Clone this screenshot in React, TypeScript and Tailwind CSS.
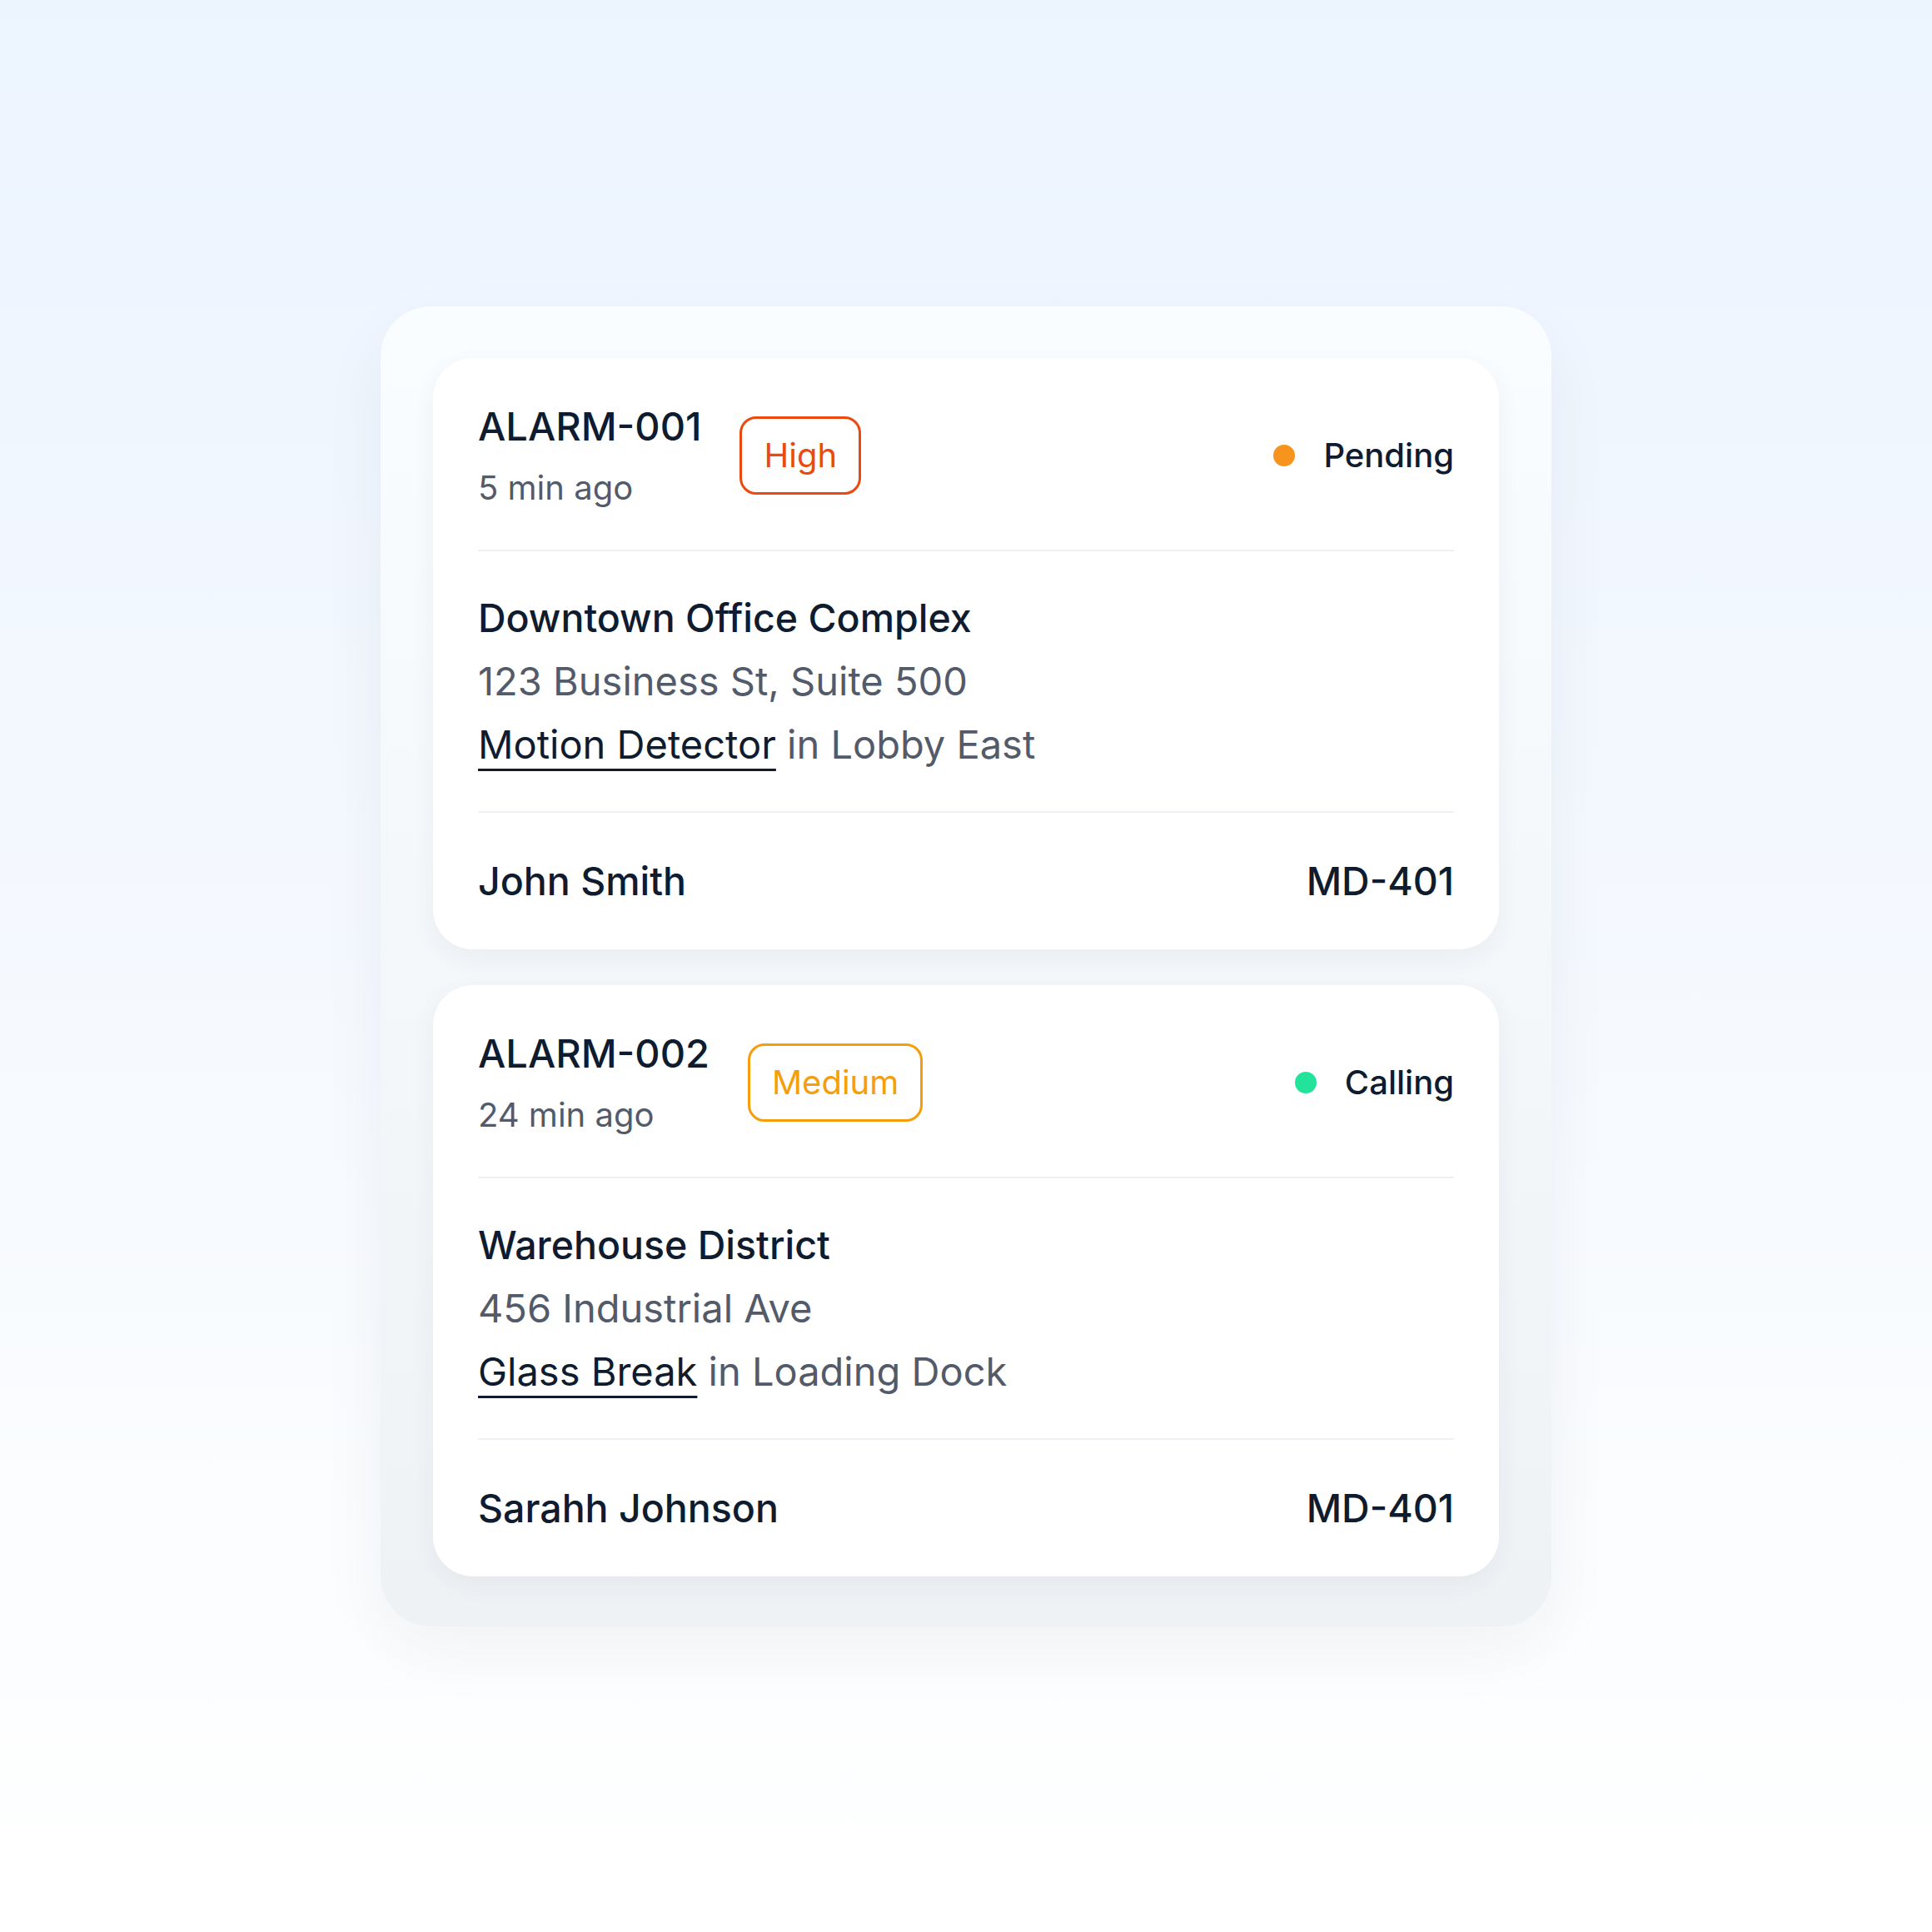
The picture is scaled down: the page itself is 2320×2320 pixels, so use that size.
import React from "react";

interface Alarm {
  id: string;
  ago: string;
  priority: "High" | "Medium";
  status: "Pending" | "Calling";
  site: string;
  address: string;
  device: string;
  zone: string;
  contact: string;
  code: string;
}

const ALARMS: Alarm[] = [
  {
    id: "ALARM-001",
    ago: "5 min ago",
    priority: "High",
    status: "Pending",
    site: "Downtown Office Complex",
    address: "123 Business St, Suite 500",
    device: "Motion Detector",
    zone: "Lobby East",
    contact: "John Smith",
    code: "MD-401",
  },
  {
    id: "ALARM-002",
    ago: "24 min ago",
    priority: "Medium",
    status: "Calling",
    site: "Warehouse District",
    address: "456 Industrial Ave",
    device: "Glass Break",
    zone: "Loading Dock",
    contact: "Sarahh Johnson",
    code: "MD-401",
  },
];

function PriorityBadge({ priority }: { priority: Alarm["priority"] }) {
  const tone =
    priority === "High"
      ? "border-[#ea4a10] text-[#ea4a10]"
      : "border-[#f59e0b] text-[#f59e0b]";
  return (
    <span
      className={`flex h-[94px] items-center rounded-[20px] border-[3px] px-[26px] text-[40px] leading-none font-normal ${tone}`}
    >
      {priority}
    </span>
  );
}

function StatusPill({ status }: { status: Alarm["status"] }) {
  const dot = status === "Pending" ? "bg-[#f7941d]" : "bg-[#22e39a]";
  return (
    <div className="flex items-center gap-[34px]">
      <span className={`h-[26px] w-[26px] rounded-full ${dot}`} />
      <span className="text-[40px] leading-none font-medium text-[#0f1b2e]">{status}</span>
    </div>
  );
}

function AlarmCard({ alarm }: { alarm: Alarm }) {
  return (
    <div className="rounded-[48px] bg-white px-[54px] shadow-[0_10px_30px_rgba(30,41,59,0.05)]">
      <div className="flex items-center justify-between border-b-2 border-[#edf0f4] pt-[50px] pb-[46px]">
        <div className="flex items-center gap-[46px]">
          <div className="flex flex-col">
            <span className="text-[47px] leading-[64px] font-medium text-[#0f1b2e]">{alarm.id}</span>
            <span className="mt-[14px] text-[40px] leading-[56px] text-[#535b6a]">{alarm.ago}</span>
          </div>
          <PriorityBadge priority={alarm.priority} />
        </div>
        <StatusPill status={alarm.status} />
      </div>

      <div className="flex flex-col border-b-2 border-[#edf0f4] py-[42px] text-[47px] leading-[76px]">
        <span className="text-[46.5px] font-medium text-[#0f1b2e]">{alarm.site}</span>
        <span className="text-[#535b6a]">{alarm.address}</span>
        <span className="text-[#535b6a]">
          <span className="text-[#0f1b2e] underline decoration-[3px] underline-offset-[12px]">
            {alarm.device}
          </span>{" "}
          in {alarm.zone}
        </span>
      </div>

      <div className="flex items-center justify-between py-[50px] text-[46.5px] leading-[64px] font-medium text-[#0f1b2e]">
        <span>{alarm.contact}</span>
        <span>{alarm.code}</span>
      </div>
    </div>
  );
}

export default function App() {
  return (
    <div
      className="flex min-h-[2320px] w-full items-center justify-center bg-gradient-to-b from-[#ecf4fe] via-[#f5f9fe] to-white"
      style={{ fontFamily: "Inter, 'Noto Sans', sans-serif" }}
    >
      <div className="flex w-[1406px] flex-col gap-[43px] rounded-[60px] bg-gradient-to-b from-[#fafdff] to-[#eff2f5] px-[63px] pt-[62px] pb-[60px] shadow-[0_30px_80px_rgba(30,41,59,0.05)]">
        {ALARMS.map((alarm) => (
          <AlarmCard key={alarm.id} alarm={alarm} />
        ))}
      </div>
    </div>
  );
}
